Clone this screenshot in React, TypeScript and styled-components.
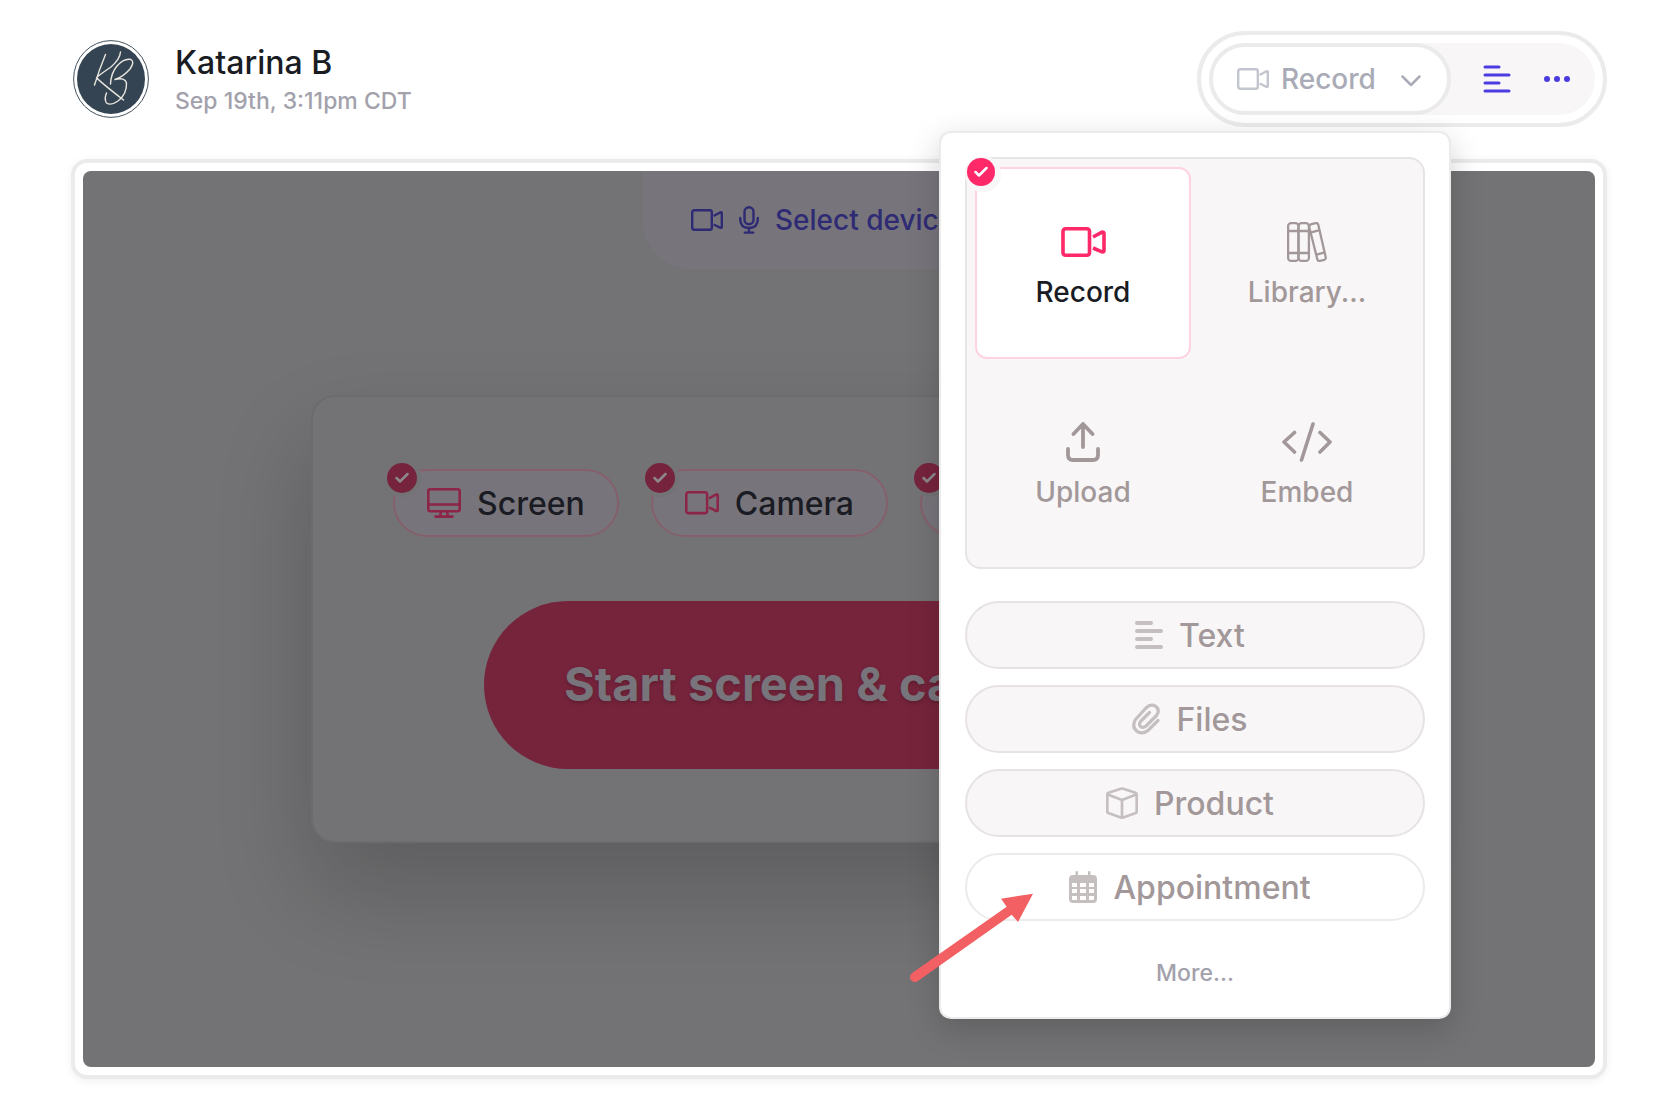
import React from "react";
import styled, { createGlobalStyle, css } from "styled-components";

const GlobalStyle = createGlobalStyle`
  *, *::before, *::after { box-sizing: border-box; }
  body {
    margin: 0;
    background: #fff;
    font-family: Inter, "Open Sans", sans-serif;
    font-weight: 500;
    color: #1a1c24;
  }
  button {
    font: inherit;
    color: inherit;
    margin: 0;
    padding: 0;
    border: 0;
    background: none;
    cursor: pointer;
  }
`;

const Page = styled.main`
  display: flex;
  flex-direction: column;
  gap: 32px;
  padding: 31px 59px 32px 71px;
`;

const Header = styled.header`
  display: flex;
  align-items: center;
  justify-content: space-between;
`;

const Author = styled.div`
  display: flex;
  align-items: center;
  gap: 26px;
  padding-left: 2px;
`;

const AuthorText = styled.div`
  display: flex;
  flex-direction: column;
  padding-top: 4px;
`;

const AuthorName = styled.h1`
  margin: 0;
  font-size: 32px;
  line-height: 40px;
  font-weight: 500;
`;

const Stamp = styled.time`
  font-size: 23px;
  line-height: 36px;
  color: #a2a1ac;
`;

const Toolbar = styled.div`
  position: relative;
  padding: 8px;
  border: 4px solid #ebebeb;
  border-radius: 48px;
  background: #fff;
`;

const ToolbarTrack = styled.div`
  display: flex;
  align-items: center;
  border-radius: 36px;
  background: #f8f6f7;
`;

const ModeAnchor = styled.div`
  position: relative;
`;

const ModeButton = styled.button`
  display: flex;
  align-items: center;
  gap: 12px;
  width: 242px;
  height: 72px;
  padding: 0 26px 0 24px;
  border: 4px solid #ebebeb;
  border-radius: 36px;
  background: #fff;
  font-size: 28px;
  color: #a9abb6;
  & > svg:first-child { color: #c3c5cf; }
  & > svg:last-child { margin-left: auto; }
`;

const ToolButtons = styled.div`
  display: flex;
  align-items: center;
  gap: 32px;
  padding: 0 24px 0 32px;
  color: #4b3be0;
`;

const IconButton = styled.button`
  display: flex;
`;

const Panel = styled.section`
  position: absolute;
  z-index: 2;
  top: calc(100% + 16px);
  right: 0;
  width: 512px;
  padding: 24px;
  border: 2px solid #ebebeb;
  border-radius: 12px;
  background: #fff;
  box-shadow: 0 10px 32px rgba(0, 0, 0, 0.18);
`;

const TileGrid = styled.div`
  display: grid;
  grid-template-columns: 1fr 1fr;
  gap: 8px;
  padding: 8px;
  border: 2px solid #e6e4e4;
  border-radius: 16px;
  background: #f8f6f7;
`;

const Tile = styled.button<{ $selected?: boolean }>`
  position: relative;
  display: flex;
  flex-direction: column;
  align-items: center;
  justify-content: center;
  gap: 10px;
  height: 192px;
  padding-top: 8px;
  border: 2px solid transparent;
  border-radius: 12px;
  font-size: 28px;
  line-height: 40px;
  color: #a29899;
  ${(p) =>
    p.$selected &&
    css`
      border-color: #ffd3e0;
      background: #fff;
      color: #1a1c24;
      & > svg { color: #ff2868; }
    `}
`;

const Badge = styled.span<{ $dim?: boolean }>`
  position: absolute;
  display: flex;
  align-items: center;
  justify-content: center;
  border-radius: 50%;
  ${(p) =>
    p.$dim
      ? css`
          top: -8px;
          left: -8px;
          width: 30px;
          height: 30px;
          background: #76243d;
          color: #8b878c;
          box-shadow: 0 0 0 4px #737375;
        `
      : css`
          top: -11px;
          left: -10px;
          width: 28px;
          height: 28px;
          background: #ff2868;
          color: #fff;
          box-shadow: 2px 2px 0 4px #f8f6f7;
        `}
`;

const ActionList = styled.div`
  display: flex;
  flex-direction: column;
  gap: 16px;
  margin-top: 32px;
`;

const ActionButton = styled.button<{ $plain?: boolean }>`
  display: flex;
  align-items: center;
  justify-content: center;
  gap: 16px;
  height: 68px;
  padding-right: 10px;
  border: 2px solid ${(p) => (p.$plain ? "#ebebeb" : "#e7e3e4")};
  border-radius: 34px;
  background: ${(p) => (p.$plain ? "#fff" : "#f8f6f7")};
  font-size: 32px;
  color: #a29899;
  & > svg { color: #c5bfc0; }
`;

const MoreButton = styled.button`
  display: block;
  margin: 32px auto 0;
  font-size: 23px;
  line-height: 40px;
  color: #a2a1ac;
`;

const Pointer = styled.svg`
  position: absolute;
  left: -32px;
  bottom: 32px;
  pointer-events: none;
`;

const Frame = styled.section`
  padding: 8px;
  border: 4px solid #ebebeb;
  border-radius: 16px;
  background: #fff;
  box-shadow: 0 2px 8px rgba(0, 0, 0, 0.06);
`;

const Stage = styled.div`
  display: flex;
  flex-direction: column;
  align-items: center;
  gap: 126px;
  height: 896px;
  overflow: hidden;
  border-radius: 8px;
  background: #737375;
`;

const DeviceTab = styled.button`
  display: flex;
  align-items: center;
  gap: 16px;
  width: 392px;
  height: 98px;
  flex: none;
  padding: 0 48px;
  border-radius: 0 0 48px 48px;
  background: #77757b;
  font-size: 28px;
  white-space: nowrap;
  color: #2f2a74;
`;

const Recorder = styled.div`
  width: 1056px;
  max-width: 100%;
  padding: 72px 80px;
  border: 2px solid #6c6c6e;
  border-radius: 24px;
  background: #737375;
  box-shadow: 0 48px 96px rgba(8, 8, 16, 0.2);
`;

const ChipRow = styled.div`
  display: flex;
  gap: 32px;
`;

const Chip = styled.button`
  position: relative;
  display: flex;
  align-items: center;
  gap: 16px;
  height: 68px;
  padding: 0 32px;
  border: 2px solid #85606c;
  border-radius: 34px;
  background: #77757b;
  font-size: 32px;
  color: #1a1b23;
  & > svg { color: #8c2547; }
`;

const StartButton = styled.button`
  display: flex;
  align-items: center;
  width: 710px;
  height: 168px;
  margin: 64px auto 0;
  padding: 0 80px 4px;
  border-radius: 84px;
  background: #76243c;
  font-size: 47px;
  font-weight: 700;
  white-space: nowrap;
  color: #77757b;
  text-shadow: 0 2px 4px rgba(0, 0, 0, 0.2);
`;

const VideoIcon = ({ width = 32 }: { width?: number }) => (
  <svg width={width} height={(width * 22) / 32} viewBox="0 0 32 22" fill="none" stroke="currentColor" strokeWidth="2.4" strokeLinejoin="round">
    <rect x="1.2" y="1.2" width="19.6" height="19.6" rx="2" />
    <path d="M22.6 7 L29.500 3.2 Q30.800 3 30.800 4 V18 Q30.800 19 29.500 18.8 L22.6 15.5" />
  </svg>
);

const LinesIcon = ({ stroke = 4 }: { stroke?: number }) => (
  <svg width="28" height="28" viewBox="0 0 28 28" fill="none" stroke="currentColor" strokeWidth={stroke} strokeLinecap="round">
    <path d="M2 2H16M2 10H26M2 18H16M2 26H26" />
  </svg>
);

const CheckIcon = () => (
  <svg width="14" height="12" viewBox="0 0 14 12" fill="none" stroke="currentColor" strokeWidth="2.5" strokeLinecap="round" strokeLinejoin="round">
    <path d="M1.5 6 L5 9.5 L12.5 2" />
  </svg>
);

const ChevronIcon = () => (
  <svg width="20" height="16" viewBox="0 0 20 16" fill="none" stroke="currentColor" strokeWidth="2.5" strokeLinecap="round" strokeLinejoin="round">
    <path d="M1.5 5.5 L10 14 L18.5 5.5" />
  </svg>
);

const DotsIcon = () => (
  <svg width="28" height="8" viewBox="0 0 28 8" fill="currentColor">
    <circle cx="4" cy="4" r="3" />
    <circle cx="14" cy="4" r="3" />
    <circle cx="24" cy="4" r="3" />
  </svg>
);

const BooksIcon = () => (
  <svg width="40" height="40" viewBox="0 0 40 40" fill="none" stroke="currentColor" strokeWidth="2.3" strokeLinejoin="round">
    <rect x="1.1" y="1.1" width="10.4" height="37.8" rx="3" />
    <rect x="11.5" y="1.1" width="10.4" height="37.8" rx="3" />
    <path d="M1 9H22M1 31H22" />
    <path d="M24.5 2.2 L28.5 1.1 Q30.6 .6 31.2 2.6 L38.7 35 Q39.2 37.2 37.2 37.8 L33 38.8 Q30.8 39.3 30.3 37.2 L22.3 5.2 Q22 2.9 24.5 2.2Z" />
    <path d="M23.3 10.6 L32.5 8.2M28.8 32.8 L37.8 30.3" />
  </svg>
);

const UploadIcon = () => (
  <svg width="40" height="40" viewBox="0 0 40 40" fill="none" stroke="currentColor" strokeWidth="3.8" strokeLinecap="round" strokeLinejoin="round">
    <path d="M20 25V2M10.500 12L20 2L29.500 12" />
    <path d="M5 27V33Q5 38 10 38H30Q35 38 35 33V27" />
  </svg>
);

const CodeIcon = () => (
  <svg width="50" height="40" viewBox="0 0 50 40" fill="none" stroke="currentColor" strokeWidth="3.6" strokeLinecap="round" strokeLinejoin="round">
    <path d="M31 2L19.500 38M12.500 10.500L2 20L12.500 30M38 10.500L48 20L38 30" />
  </svg>
);

const ClipIcon = () => (
  <svg width="28" height="32" viewBox="0 0 28 32" fill="none" stroke="currentColor" strokeWidth="3.2" strokeLinecap="round" strokeLinejoin="round">
    <path d="M26 17.500L16.500 27Q11.500 31.500 6 29Q-1 24.500 3.500 16.500L14 5Q18.500 .5 23.500 3.200Q28.500 7 24.500 12.500L14 23Q11 25.500 8.500 23.500Q6.500 21 8.500 18.500L17.500 9.500" />
  </svg>
);

const BoxIcon = () => (
  <svg width="32" height="32" viewBox="0 0 32 32" fill="none" stroke="currentColor" strokeWidth="2.700" strokeLinejoin="round">
    <path d="M14.800 1.700Q16 1.300 17.200 1.700L29.500 5.800Q30.700 6.300 30.700 7.500V24.500Q30.700 25.600 29.700 26L17.200 30.400Q16 30.900 14.800 30.400L2.300 26Q1.300 25.600 1.300 24.500V7.500Q1.300 6.300 2.500 5.800Z" />
    <path d="M1.800 7.500L16 13L30.200 7.500M16 13V30" />
  </svg>
);

const CalendarIcon = () => (
  <svg width="28" height="32" viewBox="0 0 28 32" fill="currentColor">
    <path
      fillRule="evenodd"
      d="M4 4H6.500V1Q6.500 0 7.700 0T9 1V4H19V1Q19 0 20.200 0T21.500 1V4H24Q28 4 28 8V28Q28 32 24 32H4Q0 32 0 28V8Q0 4 4 4ZM3 12V16H8V12ZM11 12V16H17V12ZM20 12V16H25V12ZM3 18V22H8V18ZM11 18V22H17V18ZM20 18V22H25V18ZM3 25V28Q3 29 4 29H8V25ZM11 25V29H17V25ZM20 25V29H24Q25 29 25 28V25Z"
    />
  </svg>
);

const MonitorIcon = () => (
  <svg width="34" height="30" viewBox="0 0 34 30" fill="none" stroke="currentColor" strokeWidth="2.600" strokeLinecap="round" strokeLinejoin="round">
    <rect x="1.300" y="1.300" width="31.400" height="22" rx="2" />
    <path d="M1.300 16.500H32.700M14 23.500L13 28.500M20 23.500L21 28.500M8.500 28.600H25.500" />
  </svg>
);

const MicIcon = () => (
  <svg width="20" height="28" viewBox="0 0 20 28" fill="none" stroke="currentColor" strokeWidth="2.400" strokeLinecap="round">
    <rect x="5.500" y="1.200" width="9" height="17" rx="4.500" />
    <path d="M1.200 12V13Q1.200 22 10 22T18.800 13V12M10 22V26.500M5.800 26.600H14.200" />
  </svg>
);

const AvatarLogo = () => (
  <svg width="76" height="78" viewBox="0 0 76 78" role="img" aria-label="KB">
    <ellipse cx="38" cy="39" rx="37.400" ry="38.400" fill="#fff" stroke="#44525f" strokeWidth="1" />
    <ellipse cx="38" cy="39" rx="34" ry="35" fill="#344452" />
    <g fill="none" stroke="#e9e6e0" strokeWidth="1.400" strokeLinecap="round" strokeLinejoin="round">
      <path d="M32.500 14.500Q26.500 29 21.500 45M47.500 12Q47 19 38 27Q29 33 23.500 37.500Q26 41 50.500 60" />
      <path d="M37.500 44Q38 33 44 26Q51 18 58 19.500Q62 22 57 29Q50 37 42 39.500Q52 37 53.500 43Q54 54 45 61Q38 66 33.500 63Q31 59 33.500 53" />
    </g>
  </svg>
);

const App = () => (
  <>
    <GlobalStyle />
    <Page>
      <Header>
        <Author>
          <AvatarLogo />
          <AuthorText>
            <AuthorName>Katarina B</AuthorName>
            <Stamp>Sep 19th, 3:11pm CDT</Stamp>
          </AuthorText>
        </Author>
        <Toolbar>
          <ToolbarTrack>
            <ModeAnchor>
              <ModeButton type="button" aria-expanded="true">
                <VideoIcon />
                Record
                <ChevronIcon />
              </ModeButton>
              <Panel>
                <TileGrid>
                  <Tile type="button" $selected aria-pressed="true">
                    <Badge>
                      <CheckIcon />
                    </Badge>
                    <svg width="46" height="40" viewBox="-1 0 46 40" fill="none" stroke="currentColor" strokeWidth="3.600" strokeLinejoin="round">
                      <rect x="2" y="6.800" width="26.500" height="26.500" rx="2.500" />
                      <path d="M32 15L41 10.200Q43 9.500 43 11.500V28.500Q43 30.500 41 29.800L32 26" />
                    </svg>
                    Record
                  </Tile>
                  <Tile type="button">
                    <BooksIcon />
                    Library...
                  </Tile>
                  <Tile type="button">
                    <UploadIcon />
                    Upload
                  </Tile>
                  <Tile type="button">
                    <CodeIcon />
                    Embed
                  </Tile>
                </TileGrid>
                <ActionList>
                  <ActionButton type="button">
                    <LinesIcon />
                    Text
                  </ActionButton>
                  <ActionButton type="button">
                    <ClipIcon />
                    Files
                  </ActionButton>
                  <ActionButton type="button">
                    <BoxIcon />
                    Product
                  </ActionButton>
                  <ActionButton type="button" $plain>
                    <CalendarIcon />
                    Appointment
                  </ActionButton>
                </ActionList>
                <MoreButton type="button">More...</MoreButton>
                <Pointer width="128" height="96" viewBox="0 0 128 96" overflow="visible" aria-hidden="true">
                  <path d="M3.100 83.900L97.700 17.700L92 9.700L124 4.700L109 33L102.700 25.700L8.900 92.100A5 5 0 0 1 3.100 83.900Z" fill="#f36063" />
                </Pointer>
              </Panel>
            </ModeAnchor>
            <ToolButtons>
              <IconButton type="button" aria-label="Text">
                <LinesIcon stroke={3} />
              </IconButton>
              <IconButton type="button" aria-label="More options">
                <DotsIcon />
              </IconButton>
            </ToolButtons>
          </ToolbarTrack>
        </Toolbar>
      </Header>
      <Frame>
        <Stage>
          <DeviceTab type="button">
            <VideoIcon />
            <MicIcon />
            Select devices
          </DeviceTab>
          <Recorder>
            <ChipRow>
              <Chip type="button" aria-pressed="true">
                <Badge $dim>
                  <CheckIcon />
                </Badge>
                <MonitorIcon />
                Screen
              </Chip>
              <Chip type="button" aria-pressed="true">
                <Badge $dim>
                  <CheckIcon />
                </Badge>
                <VideoIcon width={34} />
                Camera
              </Chip>
              <Chip type="button" aria-pressed="true" aria-label="Microphone">
                <Badge $dim>
                  <CheckIcon />
                </Badge>
                <MicIcon />
              </Chip>
            </ChipRow>
            <StartButton type="button">Start screen &amp; camera</StartButton>
          </Recorder>
        </Stage>
      </Frame>
    </Page>
  </>
);

export default App;
